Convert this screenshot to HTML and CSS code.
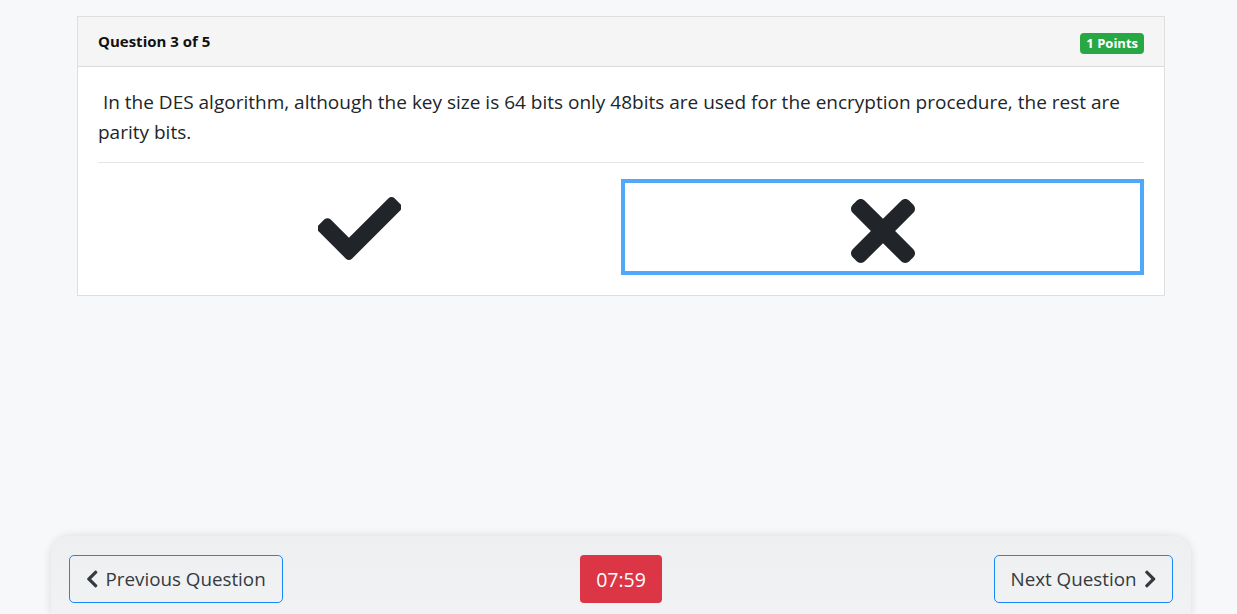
FILE: index.html
```
<!DOCTYPE html>
<html lang="en">
<head>
<meta charset="utf-8">
<title>Quiz</title>
<link rel="stylesheet" href="styles.css">
</head>
<body>
<main class="page">
  <section class="card">
    <header class="card-header">
      <span class="q-title">Question 3 of 5</span>
      <span class="badge">1 Points</span>
    </header>
    <div class="card-body">
      <p class="q-text">&nbsp;In the DES algorithm, although the key size is 64 bits only 48bits are used for the encryption procedure, the rest are parity bits.</p>
      <hr class="divider">
      <div class="options">
        <div class="option">
          <svg class="ico-check" viewBox="7.5 65 497 382" width="83" height="63" aria-hidden="true"><path fill="#212529" d="M173.898 439.404l-166.4-166.4c-9.997-9.997-9.997-26.206 0-36.204l36.203-36.204c9.997-9.998 26.207-9.998 36.204 0L192 312.69 432.095 72.596c9.997-9.997 26.207-9.997 36.204 0l36.203 36.204c9.997 9.997 9.997 26.206 0 36.204l-294.4 294.401c-9.998 9.997-26.207 9.997-36.204-.001z"/></svg>
        </div>
        <div class="option selected">
          <svg class="ico-x" viewBox="0 80 352 352" width="64" height="64" aria-hidden="true"><path fill="#212529" d="M242.72 256l100.07-100.07c12.28-12.28 12.28-32.19 0-44.48l-22.24-22.24c-12.28-12.28-32.19-12.28-44.48 0L176 189.28 75.93 89.21c-12.28-12.28-32.19-12.28-44.48 0L9.21 111.45c-12.28 12.28-12.28 32.19 0 44.48L109.28 256 9.21 356.07c-12.28 12.28-12.28 32.19 0 44.48l22.24 22.24c12.28 12.28 32.2 12.28 44.48 0L176 322.72l100.07 100.07c12.28 12.28 32.2 12.28 44.48 0l22.24-22.24c12.28-12.28 12.28-32.19 0-44.48L242.72 256z"/></svg>
        </div>
      </div>
    </div>
  </section>
</main>
<footer class="bar">
  <div class="bar-left">
    <button class="btn nav-btn"><svg class="chev" viewBox="0 0 320 512" aria-hidden="true"><path fill="#343a40" d="M34.52 239.03L228.87 44.69c9.37-9.37 24.57-9.37 33.94 0l22.67 22.67c9.36 9.36 9.37 24.52.04 33.9L131.49 256l154.02 154.75c9.34 9.38 9.32 24.54-.04 33.9l-22.67 22.67c-9.37 9.37-24.570 9.37-33.94 0L34.52 272.97c-9.37-9.37-9.37-24.57 0-33.94z"/></svg> Previous Question</button>
  </div>
  <span class="timer">07:59</span>
  <div class="bar-right">
    <button class="btn nav-btn">Next Question <svg class="chev" viewBox="0 0 320 512" aria-hidden="true"><path fill="#343a40" d="M285.476 272.971L91.132 467.314c-9.373 9.373-24.569 9.373-33.941 0l-22.667-22.667c-9.357-9.357-9.375-24.522-.04-33.901L188.505 256 34.484 101.255c-9.335-9.379-9.317-24.544.04-33.901l22.667-22.667c9.373-9.373 24.569-9.373 33.941 0L285.475 239.03c9.373 9.372 9.373 24.568.001 33.941z"/></svg></button>
  </div>
</footer>
</body>
</html>
```
FILE: styles.css
```
html, body {
  margin: 0;
  padding: 0;
  height: 100%;
}
body {
  background: #f7f8fa;
  font-family: "Open Sans", "Noto Sans", sans-serif;
  color: #212529;
  display: flex;
  flex-direction: column;
  overflow: hidden;
}
.page {
  flex: 1 1 auto;
  padding-top: 16px;
  padding-left: 77px;
  width: 1088px;
}
.card {
  background: #fff;
  border: 1px solid #dfdfdf;
}
.card-header {
  height: 49px;
  background: #f5f5f5;
  border-bottom: 1px solid #dcdcdc;
  display: flex;
  align-items: center;
  justify-content: space-between;
  padding: 0 20px;
}
.q-title {
  font-weight: 700;
  font-size: 15px;
  color: #111;
  margin-top: -2px;
}
.badge {
  background: #28a745;
  color: #fff;
  font-weight: 700;
  font-size: 13px;
  border-radius: 4px;
  height: 21px;
  line-height: 21px;
  padding: 0 6px;
  margin-top: 4px;
}
.card-body {
  padding: 20px;
}
.q-text {
  margin: 0;
  font-size: 19px;
  line-height: 30px;
  color: #212529;
}
.divider {
  border: 0;
  border-top: 1px solid #e6e6e6;
  margin: 15px 0 16px;
}
.options {
  display: grid;
  grid-template-columns: 1fr 1fr;
}
.option {
  height: 96px;
  box-sizing: border-box;
  display: flex;
  align-items: center;
  justify-content: center;
}
.option.selected {
  border: 4px solid #50a8fb;
}
.ico-check { display: block; margin-top: 3px; }
.ico-x { display: block; margin-top: 7px; }
.bar {
  flex: 0 0 auto;
  height: 78px;
  box-sizing: border-box;
  margin-left: 51px;
  width: 1140px;
  padding: 19px 18px 0;
  background: linear-gradient(#eeeff1, #f1f2f4);
  border-radius: 20px 20px 0 0;
  box-shadow: 0 0 10px rgba(0, 0, 0, 0.12);
  display: grid;
  grid-template-columns: 1fr auto 1fr;
  align-items: start;
}
.bar-left { display: flex; justify-content: flex-start; }
.bar-right { display: flex; justify-content: flex-end; }
.btn {
  font-family: "Open Sans", "Noto Sans", sans-serif;
  height: 48px;
  box-sizing: border-box;
  padding: 0 16px;
  font-size: 18.8px;
  color: #343a40;
  background: transparent;
  border: 1px solid #1a86fb;
  border-radius: 5px;
  display: flex;
  align-items: center;
  gap: 7px;
  cursor: pointer;
}
.chev {
  width: 12.5px;
  height: 20px;
  display: block;
}
.timer {
  height: 48px;
  width: 82px;
  box-sizing: border-box;
  background: #dc3545;
  color: #fff;
  border-radius: 4px;
  font-size: 19.5px;
  display: flex;
  align-items: center;
  justify-content: center;
}
```
